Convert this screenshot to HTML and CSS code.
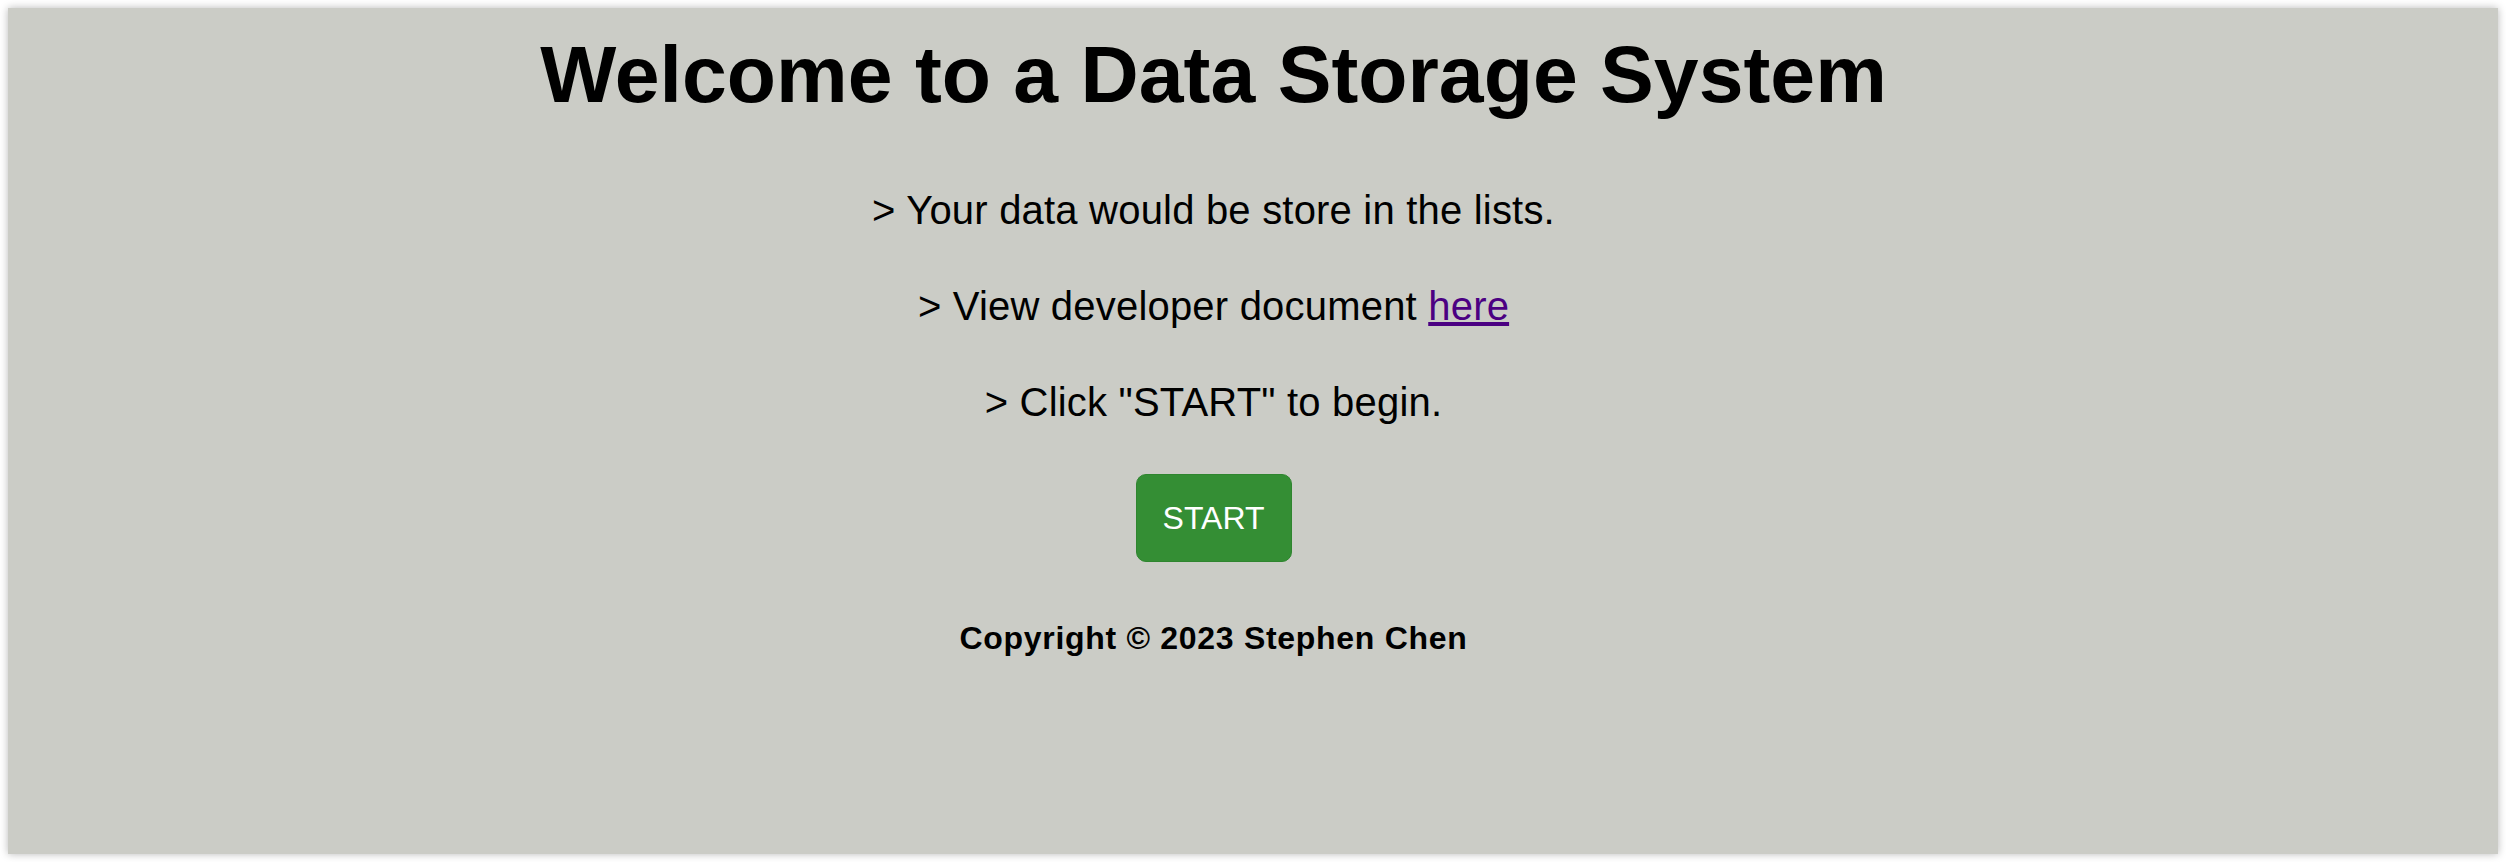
FILE: index.html
```html
<!DOCTYPE html>
<html lang="en">
<head>
<meta charset="utf-8">
<title>Data Storage System</title>
<link rel="stylesheet" href="styles.css">
</head>
<body>
<div class="window">
  <main class="content">
    <h1 class="title">Welcome to a Data Storage System</h1>
    <p class="line">&gt; Your data would be store in the lists.</p>
    <p class="line">&gt; View developer document <a class="link" href="#">here</a></p>
    <p class="line">&gt; Click "START" to begin.</p>
    <button class="start" type="button">START</button>
    <p class="copyright">Copyright © 2023 Stephen Chen</p>
  </main>
</div>
</body>
</html>
```

FILE: styles.css
```css
html, body {
  margin: 0;
  padding: 0;
  background: #ffffff;
}

body {
  font-family: "Liberation Sans", Arial, Helvetica, sans-serif;
  color: #000000;
}

.window {
  margin: 8px;
  height: 846px;
  background: #cbccc6;
  box-shadow: 0 0 8px rgba(0, 0, 0, 0.28);
  box-sizing: border-box;
  padding-top: 20px;
}

.content {
  display: flex;
  flex-direction: column;
  align-items: center;
  text-align: center;
  padding-right: 79px;
}

.title {
  margin: 0 0 66px;
  font-size: 80.6px;
  line-height: 93px;
  font-weight: 700;
}

.line {
  margin: 0 0 50px;
  font-size: 40px;
  line-height: 46px;
  letter-spacing: 0.2px;
}

.link {
  color: #4b0082;
  text-decoration: underline;
}

.start {
  margin-top: -1px;
  width: 156px;
  height: 88px;
  background: #348e34;
  color: #ffffff;
  border: 1px solid #2f852f;
  border-radius: 10px;
  font-family: "Liberation Sans", Arial, sans-serif;
  font-size: 32px;
  padding: 0;
}

.copyright {
  margin: 58px 0 0;
  font-size: 32px;
  line-height: 37px;
  font-weight: 700;
  letter-spacing: 0.7px;
}
```
